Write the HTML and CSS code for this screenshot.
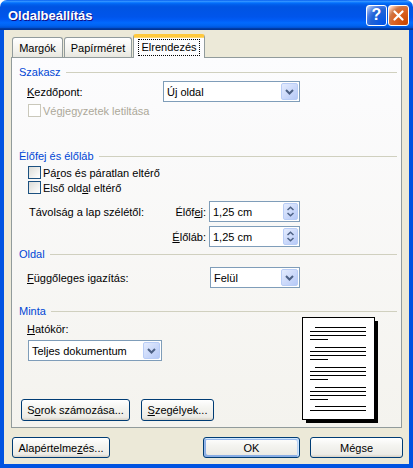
FILE: index.html
```html
<!DOCTYPE html>
<html lang="hu">
<head>
  <meta charset="UTF-8">
  <title>Oldalbeállítás</title>
  <link rel="stylesheet" href="styles.css">
</head>
<body>
<div class="window">
  <div class="titlebar">
    <span class="title">Oldalbeállítás</span>
    <span class="cap-btn help">?</span>
    <span class="cap-btn close">
      <svg width="11" height="11" viewBox="0 0 11 11"><path d="M1.5 1.5 L9.5 9.5 M9.5 1.5 L1.5 9.5" stroke="#fff" stroke-width="2.2" stroke-linecap="round"/></svg>
    </span>
  </div>

  <div class="client">
    <div class="tabs">
      <div class="tab t-marg">Margók</div>
      <div class="tab t-pap">Papírméret</div>
      <div class="tab active t-elr"><span class="focus">Elrendezés</span></div>
    </div>

    <div class="panel">
      <!-- Szakasz -->
      <div class="group-title">Szakasz</div>
      <div class="row r-kezd">
        <span class="label l-kezd"><u>K</u>ezdőpont:</span>
        <div class="combo c-kezd">
          <span class="value">Új oldal</span>
          <span class="drop"><svg width="9" height="6" viewBox="0 0 9 6"><path d="M1 1 L4.5 4.5 L8 1" fill="none" stroke="#4D6185" stroke-width="2"/></svg></span>
        </div>
      </div>
      <div class="check disabled r-veg"><span class="box"></span>Végjegyzetek letiltása</div>

      <!-- Élőfej és élőláb -->
      <div class="group-title g-elo">Élőfej és élőláb</div>
      <div class="check r-paros"><span class="box"></span>Pá<u>r</u>os és páratlan eltérő</div>
      <div class="check r-elso"><span class="box"></span>Első old<u>a</u>l eltérő</div>
      <div class="row spinrow r-tav">
        <span class="label l-tav">Távolság a lap szélétől:</span>
        <span class="sublabel">Élőf<u>e</u>j:</span>
        <div class="spin">
          <span class="value">1,25 cm</span>
          <span class="arrows">
            <svg width="7" height="11" viewBox="0 0 7 11"><path d="M0.5 4 L3.5 1.2 L6.5 4 M0.5 7 L3.5 9.8 L6.5 7" fill="none" stroke="#4D6185" stroke-width="1.5"/></svg>
          </span>
        </div>
      </div>
      <div class="row spinrow r-lab">
        <span class="label l-tav"></span>
        <span class="sublabel"><u>É</u>lőláb:</span>
        <div class="spin">
          <span class="value">1,25 cm</span>
          <span class="arrows">
            <svg width="7" height="11" viewBox="0 0 7 11"><path d="M0.5 4 L3.5 1.2 L6.5 4 M0.5 7 L3.5 9.8 L6.5 7" fill="none" stroke="#4D6185" stroke-width="1.5"/></svg>
          </span>
        </div>
      </div>

      <!-- Oldal -->
      <div class="group-title g-oldal">Oldal</div>
      <div class="row r-fugg">
        <span class="label l-fugg"><u>F</u>üggőleges igazítás:</span>
        <div class="combo c-fugg">
          <span class="value">Felül</span>
          <span class="drop"><svg width="9" height="6" viewBox="0 0 9 6"><path d="M1 1 L4.5 4.5 L8 1" fill="none" stroke="#4D6185" stroke-width="2"/></svg></span>
        </div>
      </div>

      <!-- Minta -->
      <div class="group-title g-minta">Minta</div>
      <div class="minta">
        <div class="minta-left">
          <div class="label l-hat"><u>H</u>atókör:</div>
          <div class="combo c-hat">
            <span class="value">Teljes dokumentum</span>
            <span class="drop"><svg width="9" height="6" viewBox="0 0 9 6"><path d="M1 1 L4.5 4.5 L8 1" fill="none" stroke="#4D6185" stroke-width="2"/></svg></span>
          </div>
          <div class="minta-btns">
            <button type="button" class="btn b-sorok">S<u>o</u>rok számozása...</button>
            <button type="button" class="btn b-szeg"><u>S</u>zegélyek...</button>
          </div>
        </div>
        <svg class="preview" width="77" height="106" viewBox="0 0 77 106">
          <rect x="4" y="4" width="72" height="102" fill="#000"/>
          <rect x="0.5" y="0.5" width="72" height="102" fill="#fff" stroke="#000"/>
          <g stroke="#000" stroke-width="1">
            <path d="M13 10.5H64 M8 14.5H64 M8 18.5H64 M8 22.5H26"/>
            <path d="M13 30.5H64 M8 34.5H64 M8 38.5H64 M8 42.5H26"/>
            <path d="M13 50.5H64 M8 54.5H64 M8 58.5H64 M8 62.5H26"/>
            <path d="M13 70.5H64 M8 74.5H64 M8 78.5H64 M8 82.5H26"/>
            <path d="M13 89.5H64 M8 93.5H64"/>
          </g>
        </svg>
      </div>
    </div>

    <div class="footer">
      <button type="button" class="btn b-alap">Alapértelme<u>z</u>és...</button>
      <button type="button" class="btn default b-ok">OK</button>
      <button type="button" class="btn b-megse">Mégse</button>
    </div>
  </div>
</div>
</body>
</html>
```

FILE: styles.css
```css
body {
  margin: 0;
  background: #fff;
}

.window {
  width: 413px;
  height: 468px;
  display: flex;
  flex-direction: column;
  font-family: "Liberation Sans", Arial, sans-serif;
  font-size: 11px;
  color: #000;
}

u {
  text-decoration: underline;
  text-underline-offset: 1px;
}

/* title bar */
.titlebar {
  height: 30px;
  box-sizing: border-box;
  display: flex;
  align-items: center;
  padding: 0 4px 0 8px;
  border-radius: 7px 7px 0 0;
  background: linear-gradient(180deg, #0058ee 0%, #3593ff 4%, #288eff 6%, #127dff 8%, #036ffc 10%, #0262ee 14%, #0057e5 20%, #0054e3 24%, #0055eb 56%, #005bf5 66%, #026afe 76%, #0062ef 86%, #0052d6 92%, #0040ab 94%, #003092 100%);
}

.title {
  flex: 1;
  color: #fff;
  font-weight: bold;
  font-size: 13px;
  text-shadow: 1px 1px #0f1089;
  padding-top: 1px;
}

.cap-btn {
  width: 21px;
  height: 21px;
  box-sizing: border-box;
  border: 1px solid #fff;
  border-radius: 3px;
  display: flex;
  align-items: center;
  justify-content: center;
  color: #fff;
  font-weight: bold;
  font-size: 16px;
}

.help {
  background: radial-gradient(circle at 90% 90%, #0054e9 0%, #2263d5 55%, #4479e4 70%, #a3bbec 90%, #fff 100%);
  margin-right: 1px;
}

.close {
  background: radial-gradient(circle at 90% 90%, #cc4600 0%, #dc6527 55%, #cd7546 70%, #ffccb2 90%, #fff 100%);
}

/* client */
.client {
  flex: 1;
  display: flex;
  flex-direction: column;
  background: #ece9d8;
  border: 4px solid #0053e1;
  border-top: none;
  padding: 5px 7px 0 7px;
}

.tabs {
  display: flex;
  align-items: flex-end;
  height: 23px;
  position: relative;
  z-index: 1;
  margin-bottom: -1px;
}

.tab {
  height: 20px;
  box-sizing: border-box;
  border: 1px solid #919b9c;
  border-bottom: none;
  border-radius: 3px 3px 0 0;
  background: linear-gradient(180deg, #fff, #f3f3ef 60%, #e8e7df);
  display: flex;
  align-items: center;
  justify-content: center;
  margin-bottom: 1px;
}

.t-marg { width: 51px; margin-left: 1px; }
.t-pap { width: 68px; margin-left: 1px; }

.tab.active {
  width: 72px;
  height: 24px;
  margin-left: 1px;
  margin-bottom: 0;
  border-top: 3px solid #ffc83c;
  box-shadow: inset 0 1px #ffd86a;
  background: #fcfcfe;
}

.focus {
  outline: 1px dotted #000;
  padding: 1px 2px 2px;
}

.panel {
  height: 371px;
  box-sizing: border-box;
  border: 1px solid #919b9c;
  background: linear-gradient(180deg, #fcfcfe, #f4f3ee);
  padding: 7px 4px 0 7px;
}

.group-title {
  height: 14px;
  display: flex;
  align-items: center;
  color: #0046d5;
}

.group-title::after {
  content: "";
  flex: 1;
  height: 1px;
  background: #d0d0bf;
  margin-left: 5px;
}

.row {
  display: flex;
  align-items: center;
  height: 21px;
  padding-left: 8px;
}

.label { flex: none; }
.l-kezd { width: 136px; }
.l-fugg { width: 183px; }
.l-tav { flex: 1; padding-left: 2px; }

.spinrow { width: 273px; }

.sublabel { margin-right: 3px; }

.r-kezd { margin-top: 2px; }
.r-veg { margin-top: 2px; }
.g-elo { margin-top: 32px; }
.r-paros { margin-top: 3px; }
.r-elso { margin-top: 2px; }
.r-tav { margin-top: 7px; }
.r-lab { margin-top: 4px; }
.g-oldal { margin-top: 0; }
.r-fugg { margin-top: 6px; }
.g-minta { margin-top: 16px; }

/* checkboxes */
.check {
  display: flex;
  align-items: center;
  height: 13px;
  padding-left: 9px;
}

.box {
  width: 13px;
  height: 13px;
  box-sizing: border-box;
  border: 1px solid #1c5180;
  background: linear-gradient(135deg, #dcdcd7, #fff);
  margin-right: 2px;
}

.check.disabled { color: #aca899; }
.check.disabled .box {
  border-color: #cac8bb;
  background: #fff;
}

/* combos and spin fields */
.combo, .spin {
  height: 21px;
  box-sizing: border-box;
  border: 1px solid #7f9db9;
  background: #fff;
  display: flex;
  align-items: center;
}

.combo .value, .spin .value {
  flex: 1;
  padding-left: 3px;
}

.c-kezd { width: 137px; }
.c-fugg { width: 90px; }
.c-hat { width: 134px; margin-left: 9px; margin-top: 4px; }

.drop, .arrows {
  width: 17px;
  height: 17px;
  box-sizing: border-box;
  margin-right: 1px;
  border: 1px solid #b9cdf6;
  border-radius: 2px;
  background: linear-gradient(135deg, #e4ecfe, #b6c9f7);
  display: flex;
  align-items: center;
  justify-content: center;
}

.spin { width: 91px; }

.arrows { width: 15px; }

/* minta */
.minta {
  display: flex;
}

.minta-left {
  width: 283px;
}

.l-hat {
  margin-top: 5px;
  padding-left: 8px;
  height: 13px;
  line-height: 13px;
}

.minta-btns {
  display: flex;
  gap: 11px;
  margin-top: 38px;
  padding-left: 2px;
}

.preview {
  display: block;
  margin-top: -1px;
}

/* buttons */
.btn {
  height: 21px;
  box-sizing: border-box;
  border: 1px solid #003c74;
  border-radius: 3px;
  background: linear-gradient(180deg, #fff, #f4f4f0 40%, #ecebe6 86%, #d6d0c5);
  font-family: inherit;
  font-size: 11px;
  color: #000;
  padding: 0;
}

.b-sorok { width: 109px; height: 22px; }
.b-szeg { width: 73px; height: 22px; }

.footer {
  display: flex;
  margin-top: 9px;
  margin-right: -1px;
}

.b-alap { width: 98px; margin-left: 1px; }
.b-ok { width: 97px; margin-left: auto; }
.b-megse { width: 93px; margin-left: 10px; }

.btn.default {
  box-shadow: inset -1px 1px #cee7ff, inset 1px 2px #98b8ea, inset -2px 2px #bcd4f6, inset 1px -1px #89ade4, inset 2px -2px #89ade4;
}
```
